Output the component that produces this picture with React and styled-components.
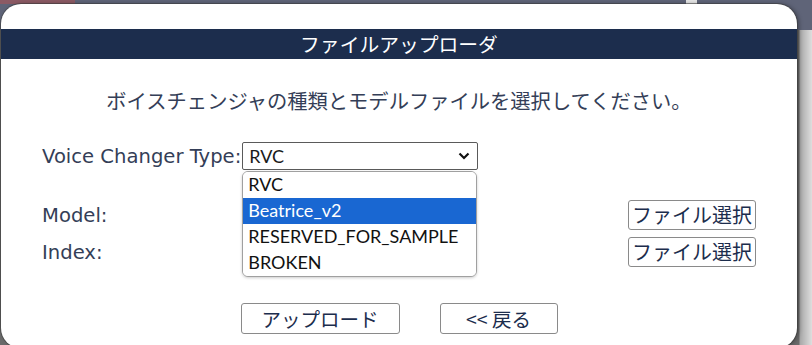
import React from "react"
import styled, { createGlobalStyle } from "styled-components"

const GlobalStyle = createGlobalStyle`
  html, body {
    margin: 0;
    width: 812px;
    height: 345px;
    overflow: hidden;
  }
  body {
    font-family: Lato, "Noto Sans CJK JP", sans-serif;
    background:
      linear-gradient(#8b5a64, #8b5a64) 0 0 / 75px 4px no-repeat,
      linear-gradient(#e4e4e4, #e4e4e4) 686px 0 / 11px 4px no-repeat,
      linear-gradient(#5f6478, #5f6478) 0 0 / 100% 30px no-repeat,
      linear-gradient(to right, #6a6a6a 0, #6a6a6a 799px, #a8a8a8 800px, #dedede 812px);
  }
`

const Page = styled.div`
  display: flex;
  padding: 4px 0 0 1px;
`

const Modal = styled.div`
  width: 796px;
  height: 344px;
  background: #fff;
  border-radius: 20px;
  padding-top: 25px;
  box-sizing: border-box;
  display: flex;
  flex-direction: column;
  box-shadow: 0 0 0 1px rgba(60, 60, 60, 0.55), 2px 0 4px rgba(0, 0, 0, 0.35);
`

const Header = styled.div`
  height: 30px;
  line-height: 30px;
  background: #1c2d4d;
  color: #fff;
  text-align: center;
  font-family: "Noto Sans CJK JP", sans-serif;
  font-size: 19.8px;
`

const Description = styled.div`
  margin-top: 28px;
  line-height: 26px;
  text-align: center;
  color: #343e57;
  font-family: "Noto Sans CJK JP", sans-serif;
  font-size: 20.3px;
`

const Form = styled.div`
  display: flex;
  flex-direction: column;
  padding: 0 41px;
  margin-top: 29px;
`

const Row = styled.div`
  display: flex;
  align-items: center;
  justify-content: ${(p) => (p.spread ? "space-between" : "flex-start")};
  height: ${(p) => p.h}px;
  margin-top: ${(p) => p.gap || 0}px;
`

const Label = styled.span`
  color: #343e57;
  font-family: "DejaVu Sans", Verdana, sans-serif;
  font-size: 19.6px;
`

const SelectWrap = styled.div`
  position: relative;
  margin-left: 1px;
`

const SelectBox = styled.div`
  width: 236px;
  height: 28px;
  box-sizing: border-box;
  border: 1px solid #5a5a5a;
  border-radius: 2px;
  display: flex;
  align-items: center;
  justify-content: space-between;
  padding: 0 7px 0 6px;
  font-size: 18px;
  color: #1a1a1a;
`

const OptionList = styled.div`
  position: absolute;
  top: 29px;
  left: 0;
  width: 235px;
  box-sizing: border-box;
  background: #fff;
  border: 1px solid #a0a0a0;
  border-radius: 6px;
  overflow: hidden;
  box-shadow: 0 1px 3px rgba(0, 0, 0, 0.2);
`

const Option = styled.div`
  height: 26px;
  line-height: 24px;
  padding-left: 5px;
  font-size: 18px;
  background: ${(p) => (p.active ? "#1967d2" : "#fff")};
  color: ${(p) => (p.active ? "#fff" : "#111")};
`

const Button = styled.button`
  height: ${(p) => p.h || 31}px;
  padding: 0 ${(p) => p.px || 3}px;
  min-width: ${(p) => p.w || 0}px;
  background: #fff;
  border: 1px solid #8a8a8a;
  border-radius: 3px;
  color: #1c2d4d;
  font-family: "Noto Sans CJK JP", sans-serif;
  font-size: ${(p) => p.fs || 19.5}px;
  line-height: 1;
  cursor: pointer;
`

const Actions = styled.div`
  display: flex;
  justify-content: center;
  gap: 40px;
  margin-top: 36px;
`

const Chevron = () => (
  <svg width="12" height="8" viewBox="0 0 12 8">
    <path d="M1.5 1.5 L6 6 L10.5 1.5" fill="none" stroke="#111" strokeWidth="2.2" />
  </svg>
)

const options = ["RVC", "Beatrice_v2", "RESERVED_FOR_SAMPLE", "BROKEN"]

export default function App() {
  return (
    <>
      <GlobalStyle />
      <Page>
        <Modal>
          <Header>ファイルアップローダ</Header>
          <Description>ボイスチェンジャの種類とモデルファイルを選択してください。</Description>
          <Form>
            <Row h={28}>
              <Label>Voice Changer Type:</Label>
              <SelectWrap>
                <SelectBox>
                  <span>RVC</span>
                  <Chevron />
                </SelectBox>
                <OptionList>
                  {options.map((o) => (
                    <Option key={o} active={o === "Beatrice_v2"}>
                      {o}
                    </Option>
                  ))}
                </OptionList>
              </SelectWrap>
            </Row>
            <Row h={30} gap={30} spread>
              <Label>Model:</Label>
              <Button h={30} w={128} fs={20}>ファイル選択</Button>
            </Row>
            <Row h={30} gap={7} spread>
              <Label>Index:</Label>
              <Button h={30} w={128} fs={20}>ファイル選択</Button>
            </Row>
          </Form>
          <Actions>
            <Button w={159}>アップロード</Button>
            <Button w={118}>&lt;&lt;&nbsp;戻る</Button>
          </Actions>
        </Modal>
      </Page>
    </>
  )
}
